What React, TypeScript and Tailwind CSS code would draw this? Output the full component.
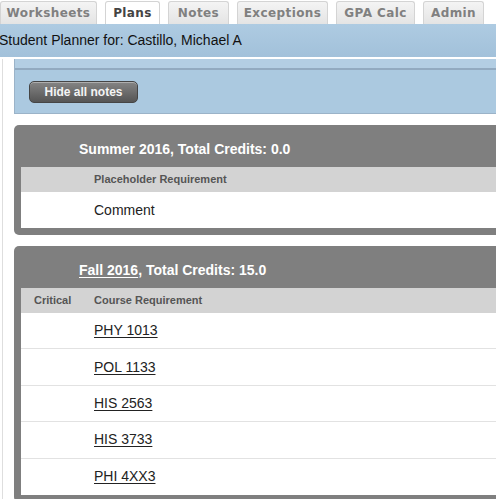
import React from 'react';

const tabs = [
  { label: 'Worksheets', width: 'w-[97px]' },
  { label: 'Plans', width: 'w-[55px]', active: true },
  { label: 'Notes', width: 'w-[61px]' },
  { label: 'Exceptions', width: 'w-[91px]' },
  { label: 'GPA Calc', width: 'w-[79px]' },
  { label: 'Admin', width: 'w-[61px]' },
];

const courses = ['PHY 1013', 'POL 1133', 'HIS 2563', 'HIS 3733', 'PHI 4XX3'];

function TabBar() {
  return (
    <div className="flex h-[24px] items-end gap-[8px] bg-white pt-[1px]">
      {tabs.map((tab) => (
        <div
          key={tab.label}
          className={`${tab.width} flex h-[23px] shrink-0 items-center justify-center rounded-t-[3px] border border-b-0 border-[#d4d4d4] text-[12px] font-bold tracking-[0.4px] ${
            tab.active
              ? 'bg-white text-[#444]'
              : 'bg-gradient-to-b from-[#f4f4f4] to-[#e4e4e4] text-[#808080]'
          }`}
          style={{ fontFamily: '"DejaVu Sans", Verdana, sans-serif' }}
        >
          {tab.label}
        </div>
      ))}
    </div>
  );
}

function TermCard({
  title,
  linked,
  credits,
  children,
}: {
  title: string;
  linked?: boolean;
  credits: string;
  children: React.ReactNode;
}) {
  return (
    <div className="ml-[14px] w-[500px] rounded-t-[5px] rounded-bl-[5px] bg-[#7f7f7f] px-[7px] pb-[7px]">
      <div className="flex h-[42px] items-end pb-[7px] pl-[58px] text-[14px] font-bold text-white">
        {linked ? <span className="underline underline-offset-2">{title}</span> : <span>{title}</span>}
        <span>, Total Credits: {credits}</span>
      </div>
      {children}
    </div>
  );
}

export default function App() {
  return (
    <div
      className="h-[499px] w-[496px] overflow-hidden bg-white"
      style={{ fontFamily: '"Liberation Sans", Arial, sans-serif' }}
    >
      <TabBar />

      <div className="flex h-[33px] items-center bg-gradient-to-b from-[#aecbe2] to-[#a2c1da] text-[14px] text-[#111]">
        <span className="-ml-[1px]">Student Planner for: Castillo, Michael A</span>
      </div>

      <div className="ml-[2px] mt-[2px] border-l border-[#dedede] pb-[20px]">
        {/* notes panel */}
        <div className="ml-[11px] border-b border-l border-[#9bb3c8] bg-[#abc9e0]">
          <div className="h-[11px] border-b-2 border-[#92aac0] bg-[#b3cee3]" />
          <div className="flex h-[43px] items-center pl-[14px]">
            <button className="h-[22px] w-[109px] rounded-[5px] border border-[#454545] bg-gradient-to-b from-[#858585] to-[#555] text-[12px] font-bold text-[#f4f4f4] shadow-[inset_0_1px_0_rgba(255,255,255,0.35)]">
              Hide all notes
            </button>
          </div>
        </div>

        <div className="mt-[11px] -ml-[3px]">
          <TermCard title="Summer 2016" credits="0.0">
            <div className="flex h-[25px] items-center bg-[#d3d3d3] pl-[73px] text-[11px] font-bold text-[#555]">
              Placeholder Requirement
            </div>
            <div className="flex h-[36px] items-center bg-white pl-[73px] text-[14px] text-[#222]">
              Comment
            </div>
          </TermCard>
        </div>

        <div className="mt-[11px] -ml-[3px]">
          <TermCard title="Fall 2016" linked credits="15.0">
            <div className="flex h-[25px] items-center bg-[#d3d3d3] text-[11px] font-bold text-[#555]">
              <span className="w-[73px] pl-[13px]">Critical</span>
              <span>Course Requirement</span>
            </div>
            <div className="bg-white">
              {courses.map((c, i) => (
                <div
                  key={c}
                  className={`flex h-[36.4px] items-center pl-[73px] text-[14px] text-[#222] ${
                    i < courses.length - 1 ? 'border-b border-[#e2e2e2]' : ''
                  }`}
                >
                  <span className="underline underline-offset-2">{c}</span>
                </div>
              ))}
            </div>
          </TermCard>
        </div>
      </div>
    </div>
  );
}
